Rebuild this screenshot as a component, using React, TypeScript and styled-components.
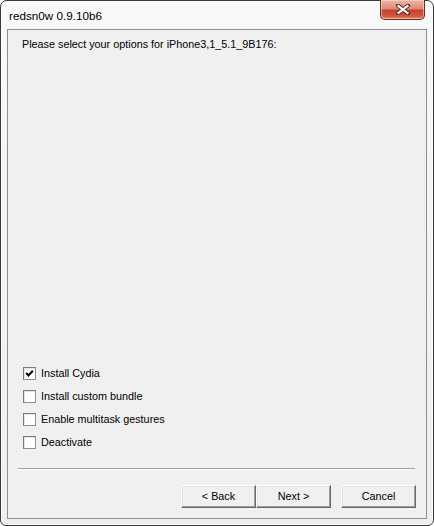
import React from "react";
import styled, { createGlobalStyle } from "styled-components";

const Global = createGlobalStyle`
  html, body { margin: 0; padding: 0; background: #ffffff; }
  body { width: 434px; height: 526px; overflow: hidden; }
`;

const Window = styled.div`
  box-sizing: border-box;
  width: 434px;
  height: 526px;
  border: 1px solid #3a3a3a;
  border-radius: 7px 7px 6px 6px;
  background: linear-gradient(180deg, #f9f9fa 0%, #f3f4f5 40%, #eeeff1 100%);
  box-shadow: inset 0 0 0 1px #fbfbfb;
  display: flex;
  flex-direction: column;
  font-family: "Liberation Sans", Arial, sans-serif;
`;

const TitleBar = styled.div`
  height: 28px;
  display: flex;
  align-items: flex-start;
  justify-content: space-between;
  padding: 0 8px 0 8px;
`;

const Title = styled.div`
  font-family: "Liberation Sans", Arial, sans-serif;
  font-size: 11.7px;
  color: #000;
  padding-top: 7px;
  line-height: 15px;
`;

const CloseButton = styled.div`
  box-sizing: border-box;
  width: 45px;
  height: 20px;
  margin-top: -1px;
  border: 1px solid #6b2a22;
  border-top: none;
  border-radius: 0 0 5px 5px;
  background: linear-gradient(180deg, #ecb8aa 0%, #dc8a76 45%, #c4432c 55%, #cf5a3f 85%, #e08a6c 100%);
  box-shadow: inset 0 0 0 1px rgba(255, 220, 210, 0.55);
  display: flex;
  align-items: center;
  justify-content: center;
`;

const Panel = styled.div`
  box-sizing: border-box;
  margin: 0 6px 6px 6px;
  flex: 1;
  border: 1px solid #8e8f92;
  background: #f0f0f0;
  display: flex;
  flex-direction: column;
  padding: 8px 10px 10px 10px;
  font-size: 10.8px;
  color: #000;
`;

const Header = styled.div`
  padding-left: 4px;
  line-height: 13px;
`;

const Options = styled.div`
  margin-top: auto;
  display: flex;
  flex-direction: column;
  padding-left: 5px;
`;

const OptionRow = styled.label`
  height: 23px;
  display: flex;
  align-items: center;
  gap: 5px;
  line-height: 13px;
`;

const Box = styled.span`
  box-sizing: border-box;
  width: 13px;
  height: 13px;
  border: 1px solid #8f8f8f;
  border-top-color: #7b7b7b;
  border-left-color: #7b7b7b;
  background: #ffffff;
  box-shadow: inset 1px 1px 0 #e6e6e6;
  display: flex;
  align-items: center;
  justify-content: center;
`;

const Separator = styled.div`
  height: 1px;
  background: #a0a0a0;
  border-bottom: 1px solid #ffffff;
  margin: 14px 1px 15px 0;
`;

const ButtonRow = styled.div`
  display: flex;
  justify-content: flex-end;
`;

const Button = styled.div<{ $gapLeft?: number }>`
  box-sizing: border-box;
  width: 75px;
  height: 23px;
  margin-left: ${(p) => p.$gapLeft ?? 0}px;
  border: 1px solid;
  border-color: #ffffff #696969 #696969 #ffffff;
  box-shadow: inset -1px -1px 0 #a0a0a0, inset 1px 1px 0 #e3e3e3;
  background: #f0f0f0;
  display: flex;
  align-items: center;
  justify-content: center;
  font-size: 10.8px;
  line-height: 13px;
`;

const options = [
  { label: "Install Cydia", checked: true },
  { label: "Install custom bundle", checked: false },
  { label: "Enable multitask gestures", checked: false },
  { label: "Deactivate", checked: false },
];

export default function App() {
  return (
    <>
      <Global />
      <Window>
        <TitleBar>
          <Title>redsn0w 0.9.10b6</Title>
          <CloseButton>
            <svg width="14" height="11" viewBox="0 0 14 11">
              <path
                d="M2 1.5 L12 9.5 M12 1.5 L2 9.5"
                stroke="#5a2a24"
                strokeWidth="4"
                strokeLinecap="square"
              />
              <path
                d="M2.5 2 L11.5 9 M11.5 2 L2.5 9"
                stroke="#ffffff"
                strokeWidth="2.2"
                strokeLinecap="square"
              />
            </svg>
          </CloseButton>
        </TitleBar>
        <Panel>
          <Header>Please select your options for iPhone3,1_5.1_9B176:</Header>
          <Options>
            {options.map((o) => (
              <OptionRow key={o.label}>
                <Box>
                  {o.checked && (
                    <svg width="9" height="9" viewBox="0 0 9 9">
                      <path d="M1.2 4 L3.5 6.5 L7.8 1.8" stroke="#000" strokeWidth="2" fill="none" />
                    </svg>
                  )}
                </Box>
                <span>{o.label}</span>
              </OptionRow>
            ))}
          </Options>
          <Separator />
          <ButtonRow>
            <Button>&lt; Back</Button>
            <Button>Next &gt;</Button>
            <Button $gapLeft={10}>Cancel</Button>
          </ButtonRow>
        </Panel>
      </Window>
    </>
  );
}
